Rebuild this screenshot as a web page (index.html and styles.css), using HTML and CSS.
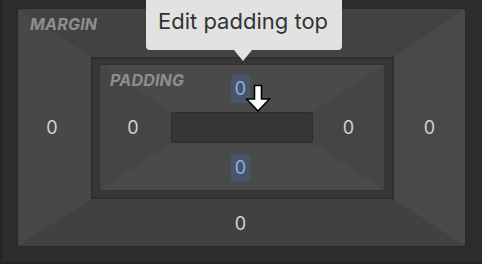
FILE: index.html
```html
<!DOCTYPE html>
<html lang="en">
<head>
<meta charset="utf-8">
<title>Box model</title>
<link rel="stylesheet" href="styles.css">
</head>
<body>
<div class="panel">
  <div class="margin-box">
    <div class="m-top">
      <span class="label">MARGIN</span>
    </div>
    <div class="m-left side-left"><span class="val">0</span></div>
    <div class="m-center">
      <div class="ring">
        <div class="padding-box">
          <div class="p-top">
            <span class="label">PADDING</span>
            <span class="val hl">0</span>
          </div>
          <div class="p-left side-left"><span class="val">0</span></div>
          <div class="content"></div>
          <div class="p-right"><span class="val">0</span></div>
          <div class="p-bottom"><span class="val hl">0</span></div>
        </div>
      </div>
    </div>
    <div class="m-right"><span class="val">0</span></div>
    <div class="m-bottom"><span class="val">0</span></div>
  </div>

  <div class="tooltip">Edit padding top</div>

  <svg class="cursor" width="26" height="30" viewBox="0 0 26 30" aria-hidden="true">
    <path d="M9.5 2.5 H16.5 V16 H24.5 L13 28 L1.5 16 H9.5 Z" fill="#ffffff" stroke="#000000" stroke-width="1.6" stroke-linejoin="miter"/>
  </svg>
</div>
</body>
</html>
```
FILE: styles.css
```css
* { box-sizing: border-box; }

html, body {
  margin: 0;
  padding: 0;
}

body {
  width: 482px;
  height: 264px;
  overflow: hidden;
  background: #232323;
  font-family: Inter, "Noto Sans", sans-serif;
}

.panel {
  position: relative;
  margin-left: 2px;
  height: 262px;
  background: #2c2c2c;
  padding: 9px 0 0 16px;
}

/* ---------- margin box ---------- */
.margin-box {
  position: relative;
  width: 447px;
  height: 237px;
  display: grid;
  grid-template-columns: 73px 303px 71px;
  grid-template-rows: 48px 142px 47px;
  border-radius: 2px;
  box-shadow: 0 0 0 1px #292929;
}

.margin-box::before {
  content: "";
  position: absolute;
  inset: 0;
  border-style: solid;
  border-width: 48px 71px 47px 73px;
  border-color: #424242 #494949 #414141 #484848;
  border-radius: 2px;
  z-index: 0;
}

.margin-box > div { position: relative; z-index: 1; }

.m-top {
  grid-column: 1 / 4;
  grid-row: 1;
  display: flex;
  align-items: flex-start;
}

.m-top .label {
  padding: 6px 0 0 12px;
}

.m-left, .m-right, .p-left, .p-right {
  display: flex;
  align-items: center;
  justify-content: center;
}

.side-left { padding-right: 5px; }

.m-center { grid-column: 2; grid-row: 2; }
.m-right { grid-column: 3; grid-row: 2; }

.m-bottom {
  grid-column: 1 / 4;
  grid-row: 3;
  display: flex;
  align-items: center;
  justify-content: center;
  padding-right: 2px;
  padding-top: 3px;
}

/* ---------- ring between margin and padding ---------- */
.ring {
  width: 303px;
  height: 142px;
  background: #373737;
  border: 2px solid #2f2f2f;
  border-radius: 3px;
  padding: 6px 8px 7px 7px;
}

/* ---------- padding box ---------- */
.padding-box {
  position: relative;
  width: 284px;
  height: 125px;
  display: grid;
  grid-template-columns: 71px 142px 71px;
  grid-template-rows: 47px 31px 47px;
  border-radius: 2px;
  box-shadow: 0 0 0 1px #333333;
}

.padding-box::before {
  content: "";
  position: absolute;
  inset: 0;
  border-style: solid;
  border-width: 47px 71px 47px 71px;
  border-color: #4a4a4a #454545 #4a4a4a #454545;
  border-radius: 2px;
  z-index: 0;
}

.padding-box > div { position: relative; z-index: 1; }

.p-top {
  grid-column: 1 / 4;
  grid-row: 1;
  display: grid;
  grid-template-columns: 1fr auto 1fr;
  align-items: center;
}

.p-top .label {
  justify-self: start;
  align-self: start;
  padding: 6px 0 0 10px;
}

.p-top .val { margin-left: -3px; }

.p-left { grid-column: 1; grid-row: 2; }
.content {
  grid-column: 2;
  grid-row: 2;
  background: #363636;
  border: 1px solid #2e2e2e;
  border-radius: 3px;
}
.p-right { grid-column: 3; grid-row: 2; }

.p-bottom {
  grid-column: 1 / 4;
  grid-row: 3;
  display: flex;
  align-items: center;
  justify-content: center;
  padding-right: 3px;
  padding-top: 3px;
}

/* ---------- text ---------- */
.label {
  font-size: 16px;
  line-height: 19px;
  font-weight: 700;
  font-style: italic;
  color: #8e8e8e;
  letter-spacing: 0.2px;
}

.val {
  font-size: 18px;
  line-height: 22px;
  color: #d2d2d2;
}

.val.hl {
  height: 28px;
  line-height: 28px;
  padding: 0 4px;
  border-radius: 3px;
  background: #4a5467;
  color: #86aff0;
}

/* ---------- tooltip ---------- */
.tooltip {
  position: absolute;
  left: 144px;
  top: -10px;
  width: 196px;
  padding: 18px 0 16px 12px;
  font-size: 22px;
  line-height: 26px;
  color: #333333;
  background: #e2e2e2;
  border-radius: 4px;
  z-index: 5;
  white-space: nowrap;
}

.tooltip::after {
  content: "";
  position: absolute;
  left: 88px;
  bottom: -11px;
  border-left: 9px solid transparent;
  border-right: 9px solid transparent;
  border-top: 11px solid #e2e2e2;
}

/* ---------- cursor ---------- */
.cursor {
  position: absolute;
  left: 243px;
  top: 83px;
  z-index: 6;
}
```
